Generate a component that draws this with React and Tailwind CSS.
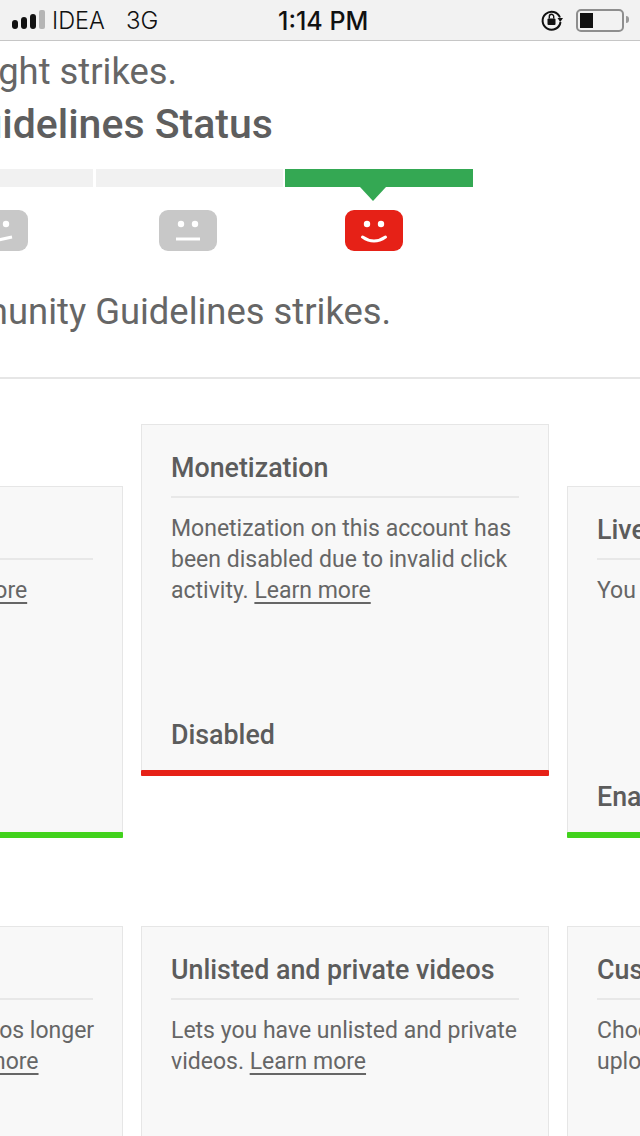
const roboto = { fontFamily: 'Roboto, "Noto Sans", sans-serif' };

function Face({ color, mood, className = '' }) {
  return (
    <svg width="58" height="41" viewBox="0 0 58 41" className={`block shrink-0 ${className}`}>
      <rect width="58" height="41" rx="9" fill={color} />
      <circle cx="22" cy="14" r="3.2" fill="#fff" />
      <circle cx="36" cy="14" r="3.2" fill="#fff" />
      {mood === 'flat' && <path d="M17 29 H41" stroke="#fff" strokeWidth="3" fill="none" />}
      {mood === 'happy' && <path d="M17.5 27 Q29 35 40.5 27" stroke="#fff" strokeWidth="3" strokeLinecap="round" fill="none" />}
      {mood === 'sad' && <path d="M17 32.5 L42 27" stroke="#fff" strokeWidth="3" fill="none" />}
    </svg>
  );
}

function StatusBar() {
  return (
    <div className="h-[41px] bg-[#f2f2f2] border-b border-[#c6c6c6] flex items-center relative text-[#111]" style={{ fontFamily: 'Inter, sans-serif' }}>
      <div className="flex items-end gap-[3px] ml-[12px] h-[19px] mt-[-1px]">
        <span className="w-[6px] h-[9px] rounded-[3px] bg-[#111]" />
        <span className="w-[6px] h-[12px] rounded-[3px] bg-[#111]" />
        <span className="w-[6px] h-[15px] rounded-[3px] bg-[#111]" />
        <span className="w-[6px] h-[19px] rounded-[2px] bg-[#b5b5b5]" />
      </div>
      <span className="ml-[7px] pt-[2px] text-[23.5px] font-light">IDEA</span>
      <span className="ml-[21px] pt-[2px] text-[24px] font-light">3G</span>
      <span className="absolute left-[278px] top-[3px] text-[25px] font-medium">1:14 PM</span>
      <svg width="24" height="24" viewBox="0 0 24 24" className="absolute left-[540px] top-[8px]" fill="none">
        <path d="M20 9.5 A9 9 0 1 0 20.5 14" stroke="#111" strokeWidth="2" />
        <path d="M17.5 10 L23 10 L20.2 14 Z" fill="#111" />
        <rect x="7.5" y="10.5" width="8" height="6.5" rx="1" fill="#111" />
        <path d="M9.3 10.5 V8.5 a2.2 2.2 0 0 1 4.4 0 V10.5" stroke="#111" strokeWidth="1.4" />
      </svg>
      <div className="absolute left-[576px] top-[9px] w-[48px] h-[23px] rounded-[5px] border-2 border-[#8e8e8e] p-[2px]">
        <div className="w-[13px] h-full bg-[#111]" />
      </div>
      <span className="absolute left-[626px] top-[16px] w-[3px] h-[7px] rounded-r bg-[#999]" />
    </div>
  );
}

function Card({ title, children, foot, bar, className = '' }) {
  return (
    <div className={`w-[408px] shrink-0 bg-[#f8f8f8] border border-[#e6e6e6] px-[29px] flex flex-col ${className}`}>
      <h3 className="text-[26.8px] leading-[30px] font-medium text-[#5c5c5c] pt-[28px] pb-[13px] border-b-2 border-[#e8e8e8] whitespace-nowrap">{title}</h3>
      <p className="mt-[15px] text-[23px] leading-[31px] text-[#666] whitespace-nowrap">{children}</p>
      {foot && <p className="mt-auto mb-[20px] text-[26.8px] leading-[30px] font-medium text-[#5c5c5c]">{foot}</p>}
      {bar && <div className={`h-[6px] -mx-[30px] -mb-px rounded-[1px] ${bar}`} />}
    </div>
  );
}

const Learn = () => <span className="underline underline-offset-[4px] decoration-[1.5px]">Learn more</span>;

export default function App() {
  return (
    <div className="w-[640px] h-[1136px] overflow-hidden bg-white" style={roboto}>
      <StatusBar />

      <div className="whitespace-nowrap text-[#666]">
        <p className="ml-[-306px] mt-[10px] text-[36.4px] leading-[42px]">You have no copyright strikes.</p>
        <h2 className="ml-[-270px] mt-[8px] text-[41px] leading-[46px] font-medium text-[#5e5e5e]">Community Guidelines Status</h2>

        <div className="flex ml-[-93px] mt-[22px] gap-[2px]">
          <div className="w-[186px] h-[18px] bg-[#f1f1f1]" />
          <div className="w-[187px] h-[18px] bg-[#f1f1f1] ml-[1px]" />
          <div className="w-[188px] h-[18px] bg-[#34a853] relative">
            <span className="absolute left-[75px] top-[18px] w-0 h-0 border-x-[13px] border-x-transparent border-t-[14px] border-t-[#34a853]" />
          </div>
        </div>

        <div className="flex ml-[-30px] mt-[23px]">
          <Face color="#c8c8c8" mood="sad" className="mr-[131px]" />
          <Face color="#c8c8c8" mood="flat" className="mr-[128px]" />
          <Face color="#e62117" mood="happy" />
        </div>

        <p className="ml-[-306px] mt-[38px] text-[36.4px] leading-[46px]">You have no Community Guidelines strikes.</p>
      </div>

      <div className="h-[2px] bg-[#e6e6e6] mt-[42px]" />

      <div className="flex gap-[18px] ml-[-285px] mt-[45px] items-start">
        <Card title="Copyright" foot="Good standing" bar="bg-[#41d21c]" className="h-[352px] mt-[62px]">
          No past strikes. <Learn />
        </Card>
        <Card title="Monetization" foot="Disabled" bar="bg-[#e62117]" className="h-[352px]">
          Monetization on this account has<br />been disabled due to invalid click<br />activity. <Learn />
        </Card>
        <Card title="Live streaming" foot="Enabled" bar="bg-[#41d21c]" className="h-[352px] mt-[62px]">
          You can stream live.
        </Card>
      </div>

      <div className="flex gap-[18px] ml-[-285px] mt-[88px] items-start">
        <Card title="Longer videos" className="h-[300px]">
          Allows you to create videos longer<br />than 15 minutes. <Learn />
        </Card>
        <Card title="Unlisted and private videos" className="h-[300px]">
          Lets you have unlisted and private<br />videos. <Learn />
        </Card>
        <Card title="Custom thumbnails" className="h-[300px]">
          Choose a custom thumbnail<br />uploaded by you.
        </Card>
      </div>
    </div>
  );
}
